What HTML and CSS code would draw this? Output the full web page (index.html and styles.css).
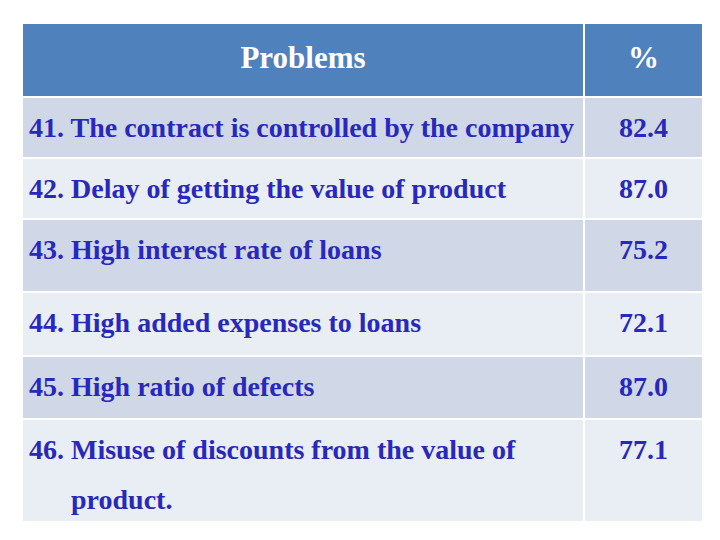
FILE: index.html
```html
<!DOCTYPE html>
<html>
<head>
<meta charset="utf-8">
<link rel="stylesheet" href="styles.css">
</head>
<body>
<div class="page">
  <div class="table">
    <div class="cell head">Problems</div>
    <div class="cell head">%</div>

    <div class="cell dark text">41. The contract is controlled by the company</div>
    <div class="cell dark num">82.4</div>

    <div class="cell light text">42. Delay of getting the value of product</div>
    <div class="cell light num">87.0</div>

    <div class="cell dark text">43. High interest rate of loans</div>
    <div class="cell dark num">75.2</div>

    <div class="cell light text">44. High added expenses to loans</div>
    <div class="cell light num">72.1</div>

    <div class="cell dark text">45. High ratio of defects</div>
    <div class="cell dark num">87.0</div>

    <div class="cell light text hang">46. Misuse of discounts from the value of product.</div>
    <div class="cell light num">77.1</div>
  </div>
</div>
</body>
</html>
```

FILE: styles.css
```css
html, body {
  margin: 0;
  padding: 0;
  background: #ffffff;
}

.page {
  padding: 24px 0 0 23px;
}

.table {
  display: grid;
  grid-template-columns: 560px 117px;
  grid-template-rows: 72px 59px 59px 71px 62px 61px 101px;
  gap: 2px;
  width: 679px;
  font-family: "Liberation Serif", "Times New Roman", serif;
  font-weight: bold;
}

.cell {
  box-sizing: border-box;
  font-size: 28px;
  line-height: 50px;
  padding-top: 5px;
  color: #2828bc;
}

.head {
  background: #4f81bd;
  color: #ffffff;
  font-size: 31px;
  line-height: 68px;
  padding-top: 0;
  text-align: center;
}

.dark {
  background: #d0d8e8;
}

.light {
  background: #e9edf4;
}

.text {
  padding-left: 6px;
  white-space: nowrap;
}

.hang {
  white-space: normal;
  padding-left: 48px;
  text-indent: -42px;
  padding-right: 60px;
}

.num {
  text-align: center;
}
```
